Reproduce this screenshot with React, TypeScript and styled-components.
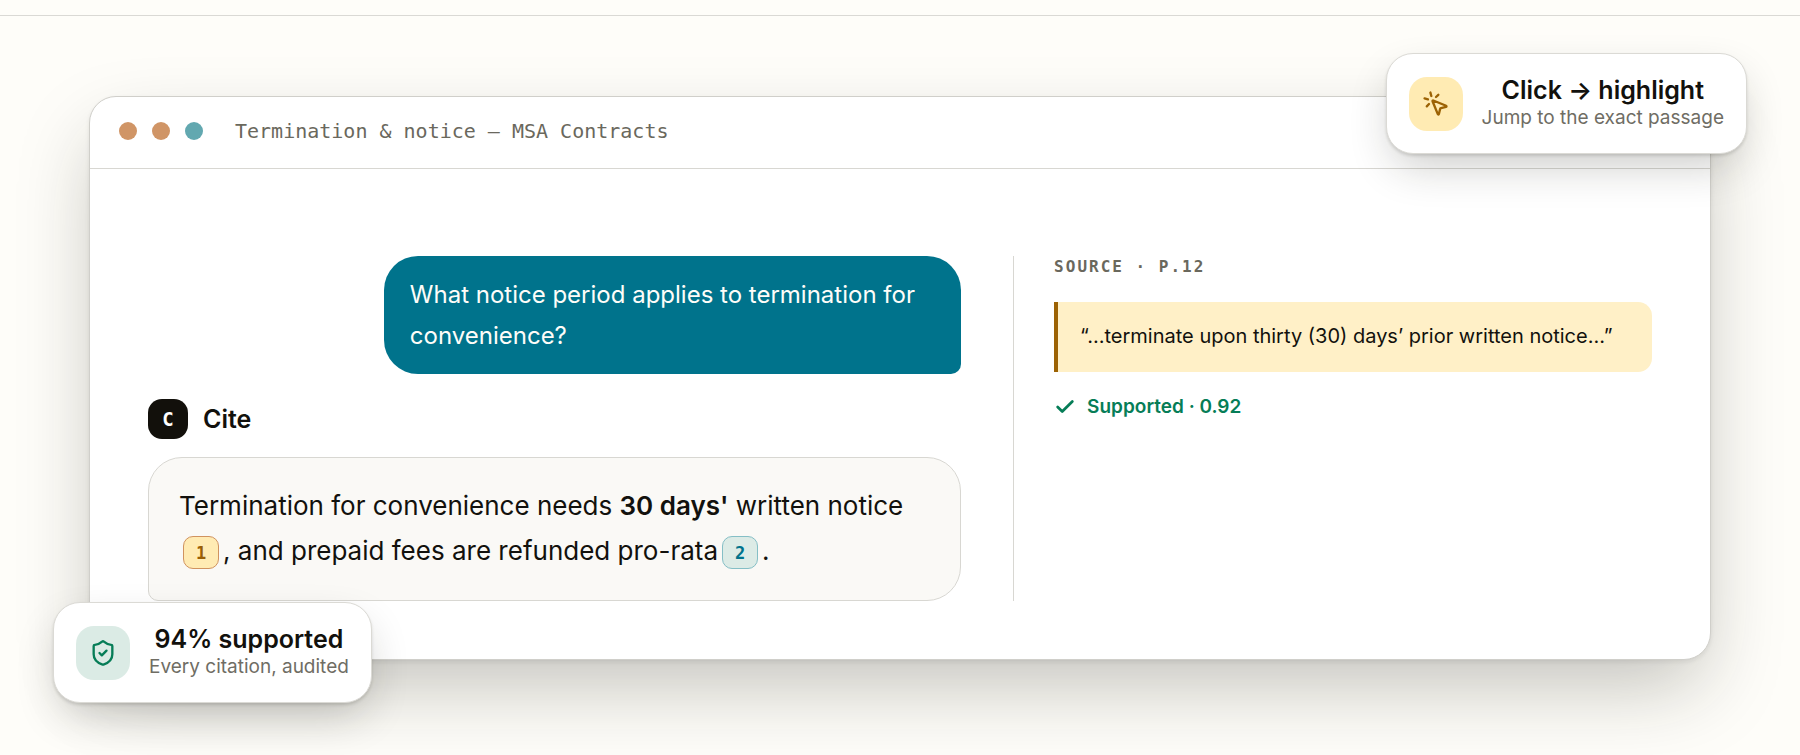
import React from "react";
import styled, { createGlobalStyle } from "styled-components";
import { Check, MousePointerClick, ShieldCheck } from "lucide-react";

const sans = `Inter, "Liberation Sans", sans-serif`;
const mono = `"DejaVu Sans Mono", "Liberation Mono", monospace`;

const GlobalStyle = createGlobalStyle`
  *, *::before, *::after { box-sizing: border-box; }
  body {
    margin: 0;
    background: #fefdf9;
    color: #12110d;
    font-family: ${sans};
  }
  p, h2, h3, blockquote { margin: 0; }
  button { font: inherit; cursor: pointer; }
`;

const TopEdge = styled.div`
  height: 16px;
  border-bottom: 1px solid #dad9d5;
`;

const Stage = styled.main`
  padding: 80px 89px 95px;
  overflow: hidden;
`;

const Window = styled.section`
  position: relative;
  border: 1px solid #d0cfca;
  border-radius: 27px;
  background: #fff;
  box-shadow: 0 2px 4px rgba(30, 30, 20, 0.08), 0 34px 80px -10px rgba(30, 30, 20, 0.27);
`;

const TitleBar = styled.header`
  display: flex;
  align-items: center;
  gap: 32px;
  height: 72px;
  padding: 0 29px 3px;
  border-bottom: 1px solid #d8d7d2;
`;

const Dots = styled.div`
  display: flex;
  gap: 15px;
`;

const Dot = styled.span<{ $color: string }>`
  width: 18px;
  height: 18px;
  border-radius: 50%;
  background: ${(p) => p.$color};
`;

const WindowTitle = styled.h2`
  font: 400 20px/28px ${mono};
  color: #6a685d;
`;

const Panes = styled.div`
  display: grid;
  grid-template-columns: 14fr 11fr;
  gap: 52px;
  padding: 87px 58px 58px;
`;

const Chat = styled.div`
  display: flex;
  flex-direction: column;
`;

const Question = styled.p`
  align-self: flex-end;
  max-width: 71%;
  padding: 18px 26px;
  border-radius: 34px 34px 10px 34px;
  background: #00738c;
  color: #fefdf9;
  font-size: 24px;
  line-height: 41px;
`;

const Author = styled.div`
  display: flex;
  align-items: center;
  gap: 15px;
  margin: 25px 0 18px;
`;

const Avatar = styled.span`
  display: grid;
  place-items: center;
  width: 40px;
  height: 40px;
  border-radius: 14px;
  background: #12100b;
  color: #fff;
  font: 700 19px/20px ${mono};
`;

const AuthorName = styled.h3`
  font-size: 25px;
  line-height: 32px;
  font-weight: 600;
`;

const Answer = styled.p`
  padding: 25px 30px 27px;
  border: 1px solid #d8d7d2;
  border-radius: 34px 34px 34px 10px;
  background: #faf9f6;
  font-size: 26px;
  line-height: 45px;

  strong { font-weight: 600; }
`;

const Citation = styled.button<{ $tone: "amber" | "teal" }>`
  display: inline-flex;
  align-items: center;
  justify-content: center;
  width: 36px;
  height: 33px;
  margin: 0 4px;
  padding: 0;
  vertical-align: middle;
  border: 1px solid ${(p) => (p.$tone === "amber" ? "#d0935f" : "#85bfc6")};
  border-radius: 10px;
  background: ${(p) => (p.$tone === "amber" ? "#ffebb3" : "#dcebe6")};
  color: ${(p) => (p.$tone === "amber" ? "#9a5f06" : "#00738c")};
  font: 700 17px/20px ${mono};
`;

const Source = styled.aside`
  padding-left: 40px;
  border-left: 1px solid #d8d7d2;
`;

const SourceLabel = styled.h3`
  font: 700 16px/22px ${mono};
  letter-spacing: 2px;
  color: #6a685d;
`;

const Quote = styled.blockquote`
  margin-top: 24px;
  padding: 16px 22px 18px;
  border-left: 4px solid #9c6204;
  border-radius: 0 14px 14px 0;
  background: #fff0c7;
  font-size: 20px;
  line-height: 36px;
`;

const Verdict = styled.p`
  display: flex;
  align-items: center;
  gap: 11px;
  margin-top: 21px;
  color: #067d57;
  font-size: 19px;
  font-weight: 600;
  line-height: 28px;
`;

const Callout = styled.div<{ $corner: "top" | "bottom" }>`
  position: absolute;
  ${(p) => (p.$corner === "top" ? "top: -44px; right: -37px;" : "bottom: -44px; left: -37px;")}
  display: flex;
  align-items: center;
  gap: 19px;
  padding: 22px;
  border: 1px solid #dbdad5;
  border-radius: 27px;
  background: #fff;
  box-shadow: 0 2px 3px rgba(30, 30, 20, 0.14), 0 18px 44px -8px rgba(30, 30, 20, 0.24);
  text-align: center;
`;

const CalloutIcon = styled.span<{ $tone: "amber" | "green" }>`
  display: grid;
  place-items: center;
  flex: none;
  width: 54px;
  height: 54px;
  border-radius: 18px;
  background: ${(p) => (p.$tone === "amber" ? "#ffebb3" : "#dbebe5")};
  color: ${(p) => (p.$tone === "amber" ? "#9c6204" : "#067d57")};
`;

const CalloutTitle = styled.h3`
  font-size: 25px;
  font-weight: 600;
  line-height: 28px;
`;

const CalloutText = styled.p`
  color: #6f6d64;
  font-size: 19px;
  line-height: 27px;
`;

export default function App() {
  return (
    <>
      <GlobalStyle />
      <TopEdge />
      <Stage>
        <Window>
          <TitleBar>
            <Dots>
              <Dot $color="#d09566" />
              <Dot $color="#d09566" />
              <Dot $color="#62a8b0" />
            </Dots>
            <WindowTitle>Termination &amp; notice — MSA Contracts</WindowTitle>
          </TitleBar>
          <Panes>
            <Chat>
              <Question>What notice period applies to termination for convenience?</Question>
              <Author>
                <Avatar>C</Avatar>
                <AuthorName>Cite</AuthorName>
              </Author>
              <Answer>
                Termination for convenience needs <strong>30 days'</strong> written notice
                <Citation type="button" $tone="amber">1</Citation>, and prepaid fees are refunded pro-rata
                <Citation type="button" $tone="teal">2</Citation>.
              </Answer>
            </Chat>
            <Source>
              <SourceLabel>SOURCE · P.12</SourceLabel>
              <Quote>“…terminate upon thirty (30) days’ prior written notice…”</Quote>
              <Verdict>
                <Check size={22} strokeWidth={3} aria-hidden />
                Supported · 0.92
              </Verdict>
            </Source>
          </Panes>
          <Callout $corner="top">
            <CalloutIcon $tone="amber">
              <MousePointerClick size={28} strokeWidth={2} aria-hidden />
            </CalloutIcon>
            <div>
              <CalloutTitle>Click → highlight</CalloutTitle>
              <CalloutText>Jump to the exact passage</CalloutText>
            </div>
          </Callout>
          <Callout $corner="bottom">
            <CalloutIcon $tone="green">
              <ShieldCheck size={28} strokeWidth={2} aria-hidden />
            </CalloutIcon>
            <div>
              <CalloutTitle>94% supported</CalloutTitle>
              <CalloutText>Every citation, audited</CalloutText>
            </div>
          </Callout>
        </Window>
      </Stage>
    </>
  );
}
